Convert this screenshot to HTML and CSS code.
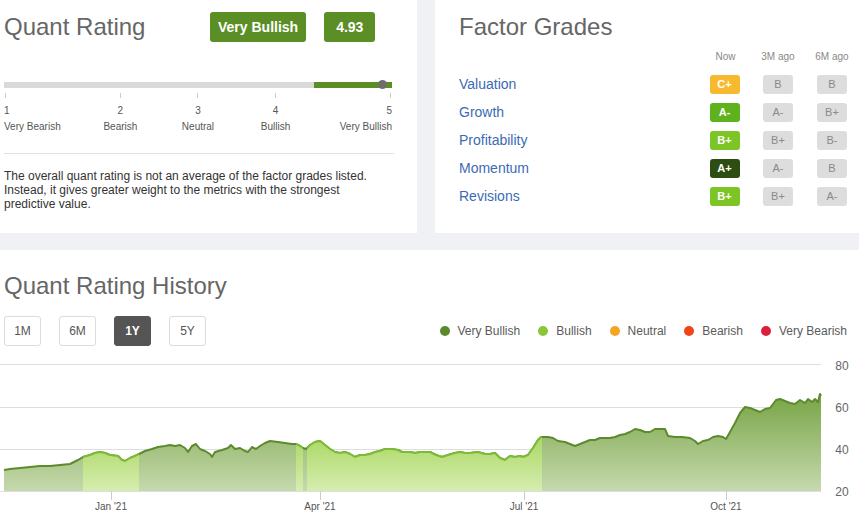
FILE: index.html
```html
<!DOCTYPE html>
<html lang="en">
<head>
    <meta charset="UTF-8">
    <title>Quant Rating</title>
    <link rel="stylesheet" href="styles.css">
</head>
<body>
    <div class="top-row">
        <!-- Quant rating -->
        <div class="card rating-card">
            <div class="rating-head">
                <h2 class="card-title">Quant Rating</h2>
                <span class="badge">Very Bullish</span>
                <span class="badge">4.93</span>
            </div>

            <div class="scale">
                <div class="scale-bar">
                    <div class="scale-fill"></div>
                    <div class="scale-dot" style="left: 97.4%"></div>
                </div>
                <div class="scale-cols">
                    <div class="scale-col first"><i></i><b>1</b><span>Very Bearish</span></div>
                    <div class="scale-col"><i></i><b>2</b><span>Bearish</span></div>
                    <div class="scale-col"><i></i><b>3</b><span>Neutral</span></div>
                    <div class="scale-col"><i></i><b>4</b><span>Bullish</span></div>
                    <div class="scale-col last"><i></i><b>5</b><span>Very Bullish</span></div>
                </div>
            </div>

            <p class="rating-note">The overall quant rating is not an average of the factor grades listed. Instead, it gives greater weight to the metrics with the strongest predictive value.</p>
        </div>

        <!-- Factor grades -->
        <div class="card grades-card">
            <h2 class="card-title">Factor Grades</h2>
            <div class="grades">
                <span></span>
                <span class="grades-head">Now</span>
                <span class="grades-head">3M ago</span>
                <span class="grades-head">6M ago</span>

                <a class="factor">Valuation</a>
                <span class="cell"><em class="grade c-plus">C+</em></span>
                <span class="cell"><em class="grade old">B</em></span>
                <span class="cell"><em class="grade old">B</em></span>

                <a class="factor">Growth</a>
                <span class="cell"><em class="grade a-minus">A-</em></span>
                <span class="cell"><em class="grade old">A-</em></span>
                <span class="cell"><em class="grade old">B+</em></span>

                <a class="factor">Profitability</a>
                <span class="cell"><em class="grade b-plus">B+</em></span>
                <span class="cell"><em class="grade old">B+</em></span>
                <span class="cell"><em class="grade old">B-</em></span>

                <a class="factor">Momentum</a>
                <span class="cell"><em class="grade a-plus">A+</em></span>
                <span class="cell"><em class="grade old">A-</em></span>
                <span class="cell"><em class="grade old">B</em></span>

                <a class="factor">Revisions</a>
                <span class="cell"><em class="grade b-plus">B+</em></span>
                <span class="cell"><em class="grade old">B+</em></span>
                <span class="cell"><em class="grade old">A-</em></span>
            </div>
        </div>
    </div>

    <!-- History -->
    <div class="card history-card">
        <h2 class="card-title">Quant Rating History</h2>
        <div class="history-controls">
            <div class="periods">
                <button>1M</button>
                <button>6M</button>
                <button class="active">1Y</button>
                <button>5Y</button>
            </div>
            <ul class="legend">
                <li><i class="dot very-bullish"></i>Very Bullish</li>
                <li><i class="dot bullish"></i>Bullish</li>
                <li><i class="dot neutral"></i>Neutral</li>
                <li><i class="dot bearish"></i>Bearish</li>
                <li><i class="dot very-bearish"></i>Very Bearish</li>
            </ul>
        </div>

        <svg class="chart" width="859" height="176" viewBox="0 355 859 176">
            <defs>
                <linearGradient id="gDark" gradientUnits="userSpaceOnUse" x1="0" y1="395" x2="0" y2="491">
                    <stop offset="0" stop-color="#78a546"/>
                    <stop offset="1" stop-color="#c6d9ae"/>
                </linearGradient>
                <linearGradient id="gLight" gradientUnits="userSpaceOnUse" x1="0" y1="430" x2="0" y2="491">
                    <stop offset="0" stop-color="#a6d55a"/>
                    <stop offset="1" stop-color="#d6edb0"/>
                </linearGradient>
                <clipPath id="lightZones">
                    <rect x="83" y="355" width="56" height="140"/>
                    <rect x="296" y="355" width="7" height="140"/>
                    <rect x="307" y="355" width="235" height="140"/>
                </clipPath>
            </defs>

            <g class="grid">
                <line x1="0" y1="364.5" x2="821" y2="364.5"/>
                <line x1="0" y1="407.5" x2="821" y2="407.5"/>
                <line x1="0" y1="449.5" x2="821" y2="449.5"/>
                <line x1="0" y1="491.5" x2="821" y2="491.5"/>
            </g>

            <g id="series">
                <path class="area" fill="url(#gDark)" d=""/>
                <path class="line" stroke="#5d8a2c" d=""/>
            </g>
            <g clip-path="url(#lightZones)">
                <path class="area" fill="url(#gLight)" d=""/>
                <path class="line" stroke="#7dba36" d=""/>
            </g>

            <g class="ticks">
                <line x1="111.5" y1="491" x2="111.5" y2="500"/>
                <line x1="320.5" y1="491" x2="320.5" y2="500"/>
                <line x1="524.5" y1="491" x2="524.5" y2="500"/>
                <line x1="726.5" y1="491" x2="726.5" y2="500"/>
            </g>
            <g class="x-labels">
                <text x="111" y="510">Jan '21</text>
                <text x="320" y="510">Apr '21</text>
                <text x="524" y="510">Jul '21</text>
                <text x="726" y="510">Oct '21</text>
            </g>
            <g class="y-labels">
                <text x="842" y="370">80</text>
                <text x="842" y="412">60</text>
                <text x="842" y="454">40</text>
                <text x="842" y="496">20</text>
            </g>
        </svg>
    </div>

    <script>
        // diem tren bieu do (toa do pixel cua trang)
        var diem = [
            [4,470],[10,469],[20,468],[30,467],[40,466],[50,466],[60,465],[70,464],[78,460],[83,457],
            [90,455],[95,453],[100,452],[105,453],[110,455],[118,456],[122,460],[125,461],[130,458],[135,456],
            [139,454],[145,451],[152,449],[158,447],[165,446],[170,445],[175,446],[180,445],[185,448],[188,452],
            [192,446],[196,444],[200,449],[205,451],[210,454],[212,457],[215,452],[222,450],[228,448],[231,445],
            [235,449],[240,448],[245,451],[248,452],[252,447],[256,449],[260,446],[265,443],[270,441],[278,442],
            [285,443],[292,444],[296,444],[300,446],[303,448],[306,449],[310,445],[315,442],[320,441],[325,445],
            [330,449],[335,452],[340,453],[345,452],[350,454],[355,457],[360,455],[365,455],[370,454],[375,452],
            [380,451],[385,449],[392,449],[398,450],[402,452],[410,452],[415,453],[420,452],[430,452],[436,455],
            [442,457],[448,455],[455,453],[460,452],[465,453],[470,453],[478,452],[485,454],[490,454],[495,453],
            [500,458],[505,460],[510,456],[515,457],[520,456],[523,457],[528,455],[533,448],[538,440],[541,437],
            [548,437],[553,438],[558,441],[565,442],[570,444],[575,446],[580,444],[585,442],[590,440],[595,440],
            [600,438],[605,438],[610,438],[615,437],[620,435],[625,434],[630,432],[635,429],[640,430],[645,432],
            [650,432],[655,429],[665,429],[668,436],[675,437],[682,437],[690,438],[695,441],[698,444],[703,441],
            [708,440],[713,437],[718,436],[723,437],[726,439],[730,432],[735,423],[740,413],[745,407],[750,408],
            [755,410],[760,412],[765,409],[770,408],[773,404],[776,400],[780,399],[785,401],[790,403],[795,404],
            [800,400],[805,403],[808,399],[812,402],[815,399],[818,402],[820,394],[821,396]
        ];

        var duongKe = 'M' + diem.map(function (p) { return p[0] + ',' + p[1]; }).join(' L');
        var vung = duongKe + ' L821,491 L4,491 Z';

        document.querySelectorAll('.chart .area').forEach(function (node) {
            node.setAttribute('d', vung);
        });
        document.querySelectorAll('.chart .line').forEach(function (node) {
            node.setAttribute('d', duongKe);
        });
    </script>
</body>
</html>
```

FILE: styles.css
```css
* {
    margin: 0;
    padding: 0;
    box-sizing: border-box;
}

body {
    background-color: #eff1f5;
    font-family: "Liberation Sans", Arial, sans-serif;
    color: #333;
}

.card {
    background-color: #fff;
}

.card-title {
    font-size: 24px;
    line-height: 30px;
    font-weight: normal;
    color: #666;
}

.top-row {
    display: flex;
    gap: 18px;
    height: 233px;
    margin-bottom: 17px;
}

/* Quant rating */
.rating-card {
    width: 417px;
    padding: 12px 23px 0 4px;
}

.rating-head {
    display: flex;
    align-items: center;
}

.rating-head .card-title {
    width: 206px;
}

.badge {
    display: inline-block;
    height: 30px;
    line-height: 30px;
    padding: 0 8px;
    margin-right: 18px;
    border-radius: 3px;
    background-color: #5b8f26;
    color: #fff;
    font-size: 14px;
    font-weight: bold;
}

.badge + .badge {
    padding: 0 12px;
}

.scale {
    margin-top: 40px;
    margin-right: 2px;
}

.scale-bar {
    position: relative;
    height: 6px;
    background-color: #d9d9d9;
}

.scale-fill {
    margin-left: 80%;
    height: 6px;
    background-color: #5b8f26;
}

.scale-dot {
    position: absolute;
    top: -2px;
    width: 9px;
    height: 9px;
    margin-left: -4px;
    border-radius: 50%;
    background-color: #6e6e6e;
}

.scale-cols {
    display: flex;
}

.scale-col {
    flex: 1;
    display: flex;
    flex-direction: column;
    align-items: center;
    font-size: 10px;
    line-height: 12px;
    color: #555;
}

.scale-col.first {
    align-items: flex-start;
}

.scale-col.last {
    align-items: flex-end;
}

.scale-col i {
    display: block;
    width: 1px;
    height: 5px;
    margin: 5px 1px 0;
    background-color: #ccc;
}

.scale-col b {
    font-weight: normal;
    margin-top: 7px;
}

.scale-col span {
    margin-top: 4px;
    white-space: nowrap;
}

.rating-note {
    margin-top: 20px;
    padding-top: 15px;
    border-top: 1px solid #e2e2e2;
    font-size: 12px;
    line-height: 14px;
    color: #333;
}

/* Factor grades */
.grades-card {
    flex: 1;
    padding: 12px 0 0 24px;
}

.grades {
    display: grid;
    grid-template-columns: 1fr 53px 54px 54px;
    grid-template-rows: 20px;
    grid-auto-rows: 28px;
    margin-top: 8px;
}

.grades-head {
    font-size: 10px;
    line-height: 14px;
    text-align: center;
    color: #888;
}

.grades-head:nth-child(2) {
    padding-left: 2px;
}

.factor {
    display: flex;
    align-items: center;
    font-size: 14px;
    color: #3c6bb4;
    cursor: pointer;
}

.cell {
    display: flex;
    align-items: center;
    justify-content: center;
}

.grade {
    width: 30px;
    height: 19px;
    line-height: 19px;
    text-align: center;
    border-radius: 3px;
    font-style: normal;
    font-size: 11px;
    font-weight: bold;
    color: #fff;
}

.grade.old {
    background-color: #dddddd;
    color: #8a8a8a;
    font-weight: normal;
}

.grade.c-plus {
    background-color: #f7ba2e;
}

.grade.a-minus {
    background-color: #5db21e;
}

.grade.b-plus {
    background-color: #7cc524;
}

.grade.a-plus {
    background-color: #2e4d13;
}

/* History */
.history-card {
    padding-top: 22px;
    height: 290px;
}

.history-card .card-title {
    line-height: 28px;
    padding-left: 4px;
}

.history-controls {
    display: flex;
    justify-content: space-between;
    align-items: center;
    margin-top: 16px;
    padding: 0 12px 0 4px;
}

.periods {
    display: flex;
    gap: 18px;
}

.periods button {
    width: 37px;
    height: 30px;
    border: 1px solid #dcdcdc;
    border-radius: 3px;
    background-color: #fff;
    font-family: inherit;
    font-size: 12px;
    color: #555;
}

.periods button.active {
    background-color: #555;
    border-color: #555;
    color: #fff;
    font-weight: bold;
}

.legend {
    display: flex;
    gap: 18px;
    list-style: none;
    font-size: 12px;
    color: #5a5a5a;
}

.legend li {
    display: flex;
    align-items: center;
    gap: 8px;
}

.dot {
    display: inline-block;
    width: 10px;
    height: 10px;
    border-radius: 50%;
}

.dot.very-bullish { background-color: #5b8a2a; }
.dot.bullish { background-color: #8ac53a; }
.dot.neutral { background-color: #f4a623; }
.dot.bearish { background-color: #f2431a; }
.dot.very-bearish { background-color: #dc1f3c; }

.chart {
    display: block;
    margin-top: 9px;
}

.chart .grid line {
    stroke: #dedede;
    stroke-width: 1;
}

.chart .ticks line {
    stroke: #ccc;
    stroke-width: 1;
}

.chart .line {
    fill: none;
    stroke-width: 2;
    stroke-linejoin: round;
}

.chart text {
    font-family: "Liberation Sans", Arial, sans-serif;
    fill: #555;
}

.chart .x-labels text {
    font-size: 10px;
    text-anchor: middle;
}

.chart .y-labels text {
    font-size: 12px;
    text-anchor: middle;
    fill: #666;
}
```
